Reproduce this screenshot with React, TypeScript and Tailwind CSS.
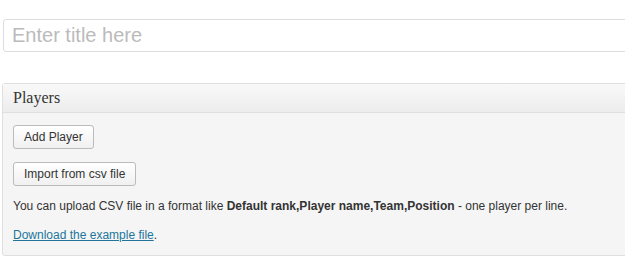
import React from 'react';

const Button = ({ children }: { children: React.ReactNode }) => (
  <button
    type="button"
    className="h-[24px] px-[10px] rounded-[3px] border border-[#bbbbbb] bg-gradient-to-b from-white to-[#f0f0f0] text-[12px] text-[#333] leading-none"
  >
    {children}
  </button>
);

export default function App() {
  return (
    <div
      className="w-[625px] h-[269px] overflow-hidden bg-white"
      style={{ fontFamily: '"Liberation Sans", Arial, sans-serif' }}
    >
      <div className="pt-[19px] pl-[3px]">
        <input
          type="text"
          placeholder="Enter title here"
          className="block w-[660px] h-[33px] rounded-[3px] border border-[#dddddd] px-[8px] text-[20px] placeholder:text-[#bbbbbb] outline-none"
        />
      </div>

      <div className="mt-[31px] ml-[2px] w-[660px] border border-[#dfdfdf] bg-[#f5f5f5] rounded-[3px]">
        <div className="h-[29px] flex items-center pl-[10px] border-b border-[#dfdfdf] bg-gradient-to-b from-[#f9f9f9] to-[#ececec]">
          <h3
            className="text-[16px] text-[#333]"
            style={{ fontFamily: '"Liberation Serif", Georgia, serif' }}
          >
            Players
          </h3>
        </div>
        <div className="px-[10px] pt-[12px] pb-[12px] flex flex-col items-start">
          <Button>Add Player</Button>
          <div className="mt-[12px]">
            <Button>Import from csv file</Button>
          </div>
          <p className="mt-[12px] text-[12px] leading-[16px] text-[#333]">
            You can upload CSV file in a format like <b>Default rank,Player name,Team,Position</b> - one player per line.
          </p>
          <p className="mt-[13px] text-[12px] leading-[16px] text-[#333]">
            <a href="#" className="text-[#21759b] underline">Download the example file</a>.
          </p>
        </div>
      </div>
    </div>
  );
}
